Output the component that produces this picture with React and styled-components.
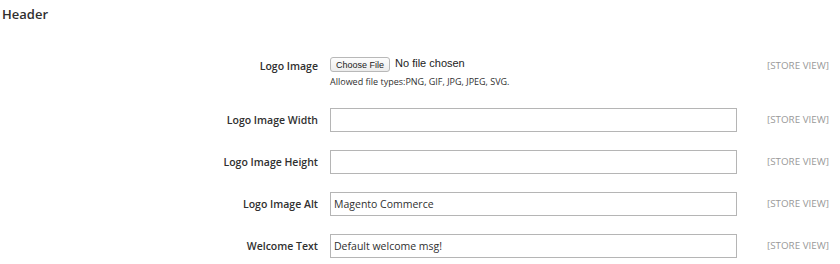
import { Fragment } from "react";
import styled, { createGlobalStyle } from "styled-components";

const Global = createGlobalStyle`
  body {
    margin: 0;
    background: #fff;
    font-family: "Open Sans", "Liberation Sans", sans-serif;
    color: #303030;
  }
`;

const Page = styled.div`
  width: 840px;
  height: 264px;
  overflow: hidden;
`;

const Title = styled.h2`
  margin: 0;
  padding: 5px 0 0 2px;
  font-size: 13px;
  font-weight: 600;
  line-height: 18px;
  color: #303030;
`;

const Form = styled.div`
  display: grid;
  grid-template-columns: 318px 407px auto;
  column-gap: 12px;
  row-gap: 18px;
  margin-top: 34px;
`;

const Label = styled.label`
  font-size: 10.5px;
  font-weight: 600;
  text-align: right;
  color: #303030;
  line-height: ${(p) => (p.$compact ? "18px" : "24px")};
`;

const Control = styled.div`
  display: flex;
  flex-direction: column;
  height: 33px;
`;

const FileLine = styled.div`
  display: flex;
  align-items: flex-start;
  gap: 5px;
  height: 18px;
`;

const FileButton = styled.button`
  font-family: "Liberation Sans", Arial, sans-serif;
  font-size: 9px;
  height: 15px;
  padding: 0 5px;
  border: 1px solid #b8b8b8;
  border-radius: 3px;
  background: linear-gradient(#fdfdfd, #ececec);
  color: #222;
`;

const FileStatus = styled.span`
  font-family: "Liberation Sans", Arial, sans-serif;
  font-size: 11px;
  color: #222;
  line-height: 12px;
`;

const Note = styled.div`
  font-size: 9px;
  color: #303030;
  margin-top: 0;
`;

const Input = styled.div`
  box-sizing: border-box;
  height: 24px;
  border: 1px solid #b5b5b5;
  padding: 0 3px;
  font-size: 10.5px;
  line-height: 22px;
  color: #303030;
`;

const Scope = styled.span`
  font-size: 9.8px;
  color: #999;
  padding-left: 18px;
  line-height: ${(p) => (p.$compact ? "18px" : "24px")};
`;

const rows = [
  { label: "Logo Image Width", value: "" },
  { label: "Logo Image Height", value: "" },
  { label: "Logo Image Alt", value: "Magento Commerce" },
  { label: "Welcome Text", value: "Default welcome msg!" },
];

export default function App() {
  return (
    <Page>
      <Global />
      <Title>Header</Title>
      <Form>
        <Label $compact>Logo Image</Label>
        <Control>
          <FileLine>
            <FileButton>Choose File</FileButton>
            <FileStatus>No file chosen</FileStatus>
          </FileLine>
          <Note>Allowed file types:PNG, GIF, JPG, JPEG, SVG.</Note>
        </Control>
        <Scope $compact>[STORE VIEW]</Scope>
        {rows.map((r) => (
          <Fragment key={r.label}>
            <Label>{r.label}</Label>
            <Input>{r.value}</Input>
            <Scope>[STORE VIEW]</Scope>
          </Fragment>
        ))}
      </Form>
    </Page>
  );
}
